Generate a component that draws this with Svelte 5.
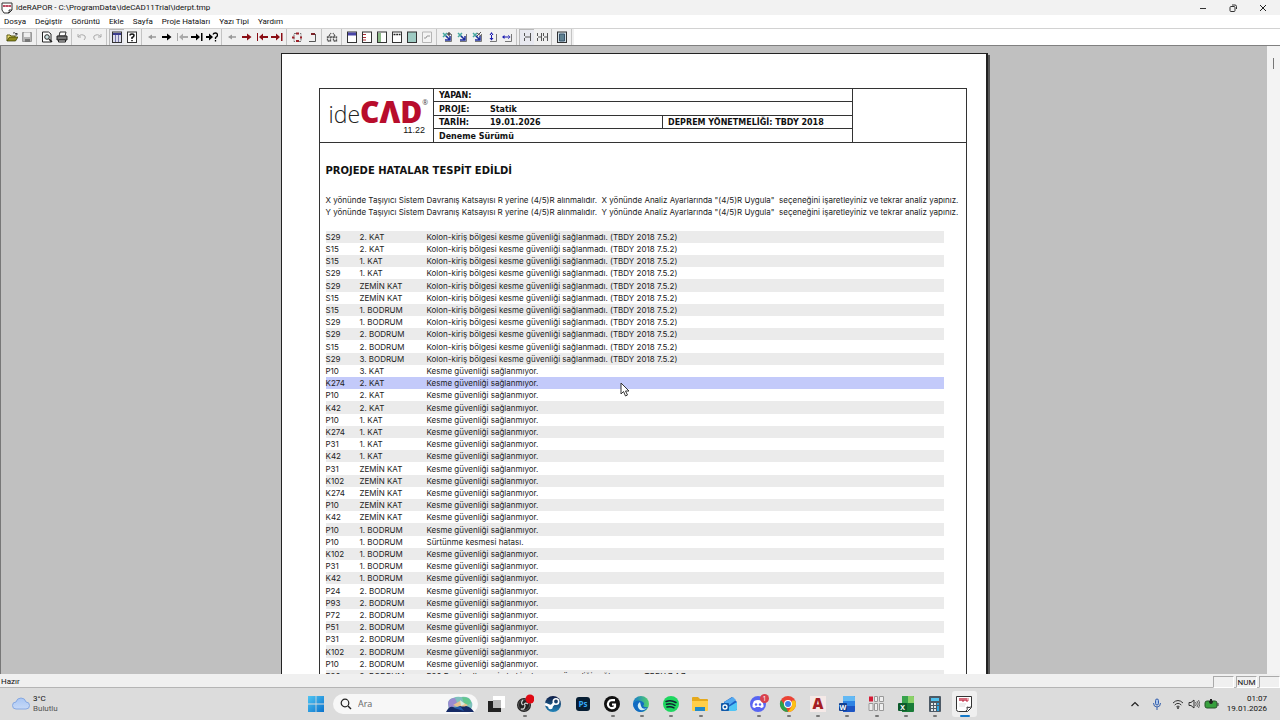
<script>
  const menus = ['Dosya', 'Değiştir', 'Görüntü', 'Ekle', 'Sayfa', 'Proje Hataları', 'Yazı Tipi', 'Yardım'];

  const right = (c) => `<path d="M1 5h5V2.500L10.500 6 6 9.500V7H1z" fill="${c}"/>`;
  const left = (c) => `<path d="M10 5.300H6V3.500L2 6l4 2.500V6.700h4z" fill="${c}"/>`;
  const toStart = (c) => `<path d="M1 2h1v8H1zM12 5H7V2.500L3 6l4 3.500V7h5z" fill="${c}"/>`;
  const toEnd = (c) => `<path d="M10 2h1.500v8H10zM0 5h5V2.500L9 6 5 9.500V7H0z" fill="${c}"/>`;
  const sheet = (inner, bg = '#fff') =>
    `<rect x="1.500" y="1" width="9" height="10.500" fill="${bg}" stroke="#333"/>${inner}`;
  const corner = '<path d="M10.500 3v7.500H4" fill="none" stroke="#777"/>';
  const magnify = '<path d="M2 2l4 4M6 2L2 6" stroke="#48a8a0" stroke-width="1.500"/><path d="M5 5l4 4M9 5v4H4" stroke="#1c2c9c" stroke-width="1.500" fill="none"/>';

  const groups = [
    [
      ['Aç', '<path d="M1 10V4h3l1 1h4v2" fill="#f3e37a" stroke="#5c5a10"/><path d="M1 10l2.500-4H12L9.500 10z" fill="#8f8a1c" stroke="#333a00" stroke-width=".7"/><path d="M7 2q2-1 3 1l1-1v2H9" fill="none" stroke="#222" stroke-width=".8"/>'],
      ['Kaydet', '<path d="M1.500 1.500h9v9h-9z" fill="#b5b5b5" stroke="#999"/><path d="M3 1.500h6V6H3z" fill="#eee"/><path d="M4 8h5v3H4z" fill="#777"/>']
    ],
    [
      ['Baskı önizleme', '<path d="M1.500 1h6L10 3v8H1.500z" fill="#fff" stroke="#222"/><circle cx="6" cy="6" r="2.300" fill="#cfe3e3" stroke="#222"/><path d="M8 8l3 3" stroke="#222" stroke-width="1.500"/>'],
      ['Yazdır', '<path d="M4 1h6L9 5H3z" fill="#fff" stroke="#333"/><path d="M1 5h10v4H1z" fill="#777" stroke="#222"/><path d="M2.500 9h7v2h-7z" fill="#ddd" stroke="#222"/>']
    ],
    [
      ['Geri al', '<path d="M2 3v3h3M2 6q3-4 7-1 1 2-1 4" fill="none" stroke="#aaa"/>'],
      ['Yinele', '<path d="M10 3v3H7M10 6Q7 2 3 5 2 7 4 9" fill="none" stroke="#aaa"/>']
    ],
    [
      ['Sayfa yapısı', sheet('<path d="M2 3h8" stroke="#3c3c90" stroke-width="2"/><path d="M4.500 4v7M7.500 4v7" stroke="#77a"/>', '#dcdcec'), true],
      ['Yardım', sheet('<path d="M4 4.500Q4 3 6 3t2 1.500Q8 6 6 6.500V8M6 9v1.300" fill="none" stroke="#111" stroke-width="1.500"/>')]
    ],
    [
      ['Önceki', left('#999')],
      ['Sonraki', right('#000')],
      ['İlk', toStart('#aaa')],
      ['Son', toEnd('#000')],
      ['Git', '<path d="M0 5h3V2.500L7 6 3 9.500V7H0z"/><path d="M7 3.500Q7.500 2 9.500 2t2 2q0 1.500-2 2.500V8M9.500 9v1.500" fill="none" stroke="#000" stroke-width="1.300"/>']
    ],
    [
      ['Önceki hata', left('#999')],
      ['Sonraki hata', right('#8a0d14')],
      ['İlk hata', toStart('#8a0d14')],
      ['Son hata', toEnd('#8a0d14')]
    ],
    [
      ['Kenarlar', '<path d="M3 2.500h7v8H3z" fill="none" stroke="#777" stroke-dasharray="2 1"/><path d="M5 1.500h3v2H5zM1 5.500h2.500v2H1zM5 9h3v2H5zM9 5.500h2v2H9z" fill="#9c2028"/>'],
      ['Köşe', '<path d="M9.500 3v7.500H3" fill="none" stroke="#555"/><path d="M5 2h4v2H5z" fill="#7b2328"/>']
    ],
    [['Bul', '<path d="M1.500 6h3v4h-3zM7.500 6h3v4h-3zM3 5l2-3M9 5L7 2M4.500 6h3" fill="none" stroke="#555" stroke-width="1.300" stroke-dasharray="2 .6"/>']],
    [
      ['Üst bilgi', sheet('<path d="M2 1.500h8v3H2z" fill="#4a46a8"/>')],
      ['Sol hiza', sheet('<path d="M2 3.500h3M2 6.500h3M2 9h3" stroke="#b03038"/>')],
      ['Sol kenar', sheet('<path d="M2 2h3v9H2z" fill="#8ab886"/>')],
      ['Ölçü', sheet('<path d="M2.500 3.500h7" stroke="#222" stroke-width="1.500" stroke-dasharray="2 .7"/>')],
      ['Zemin', sheet('', '#9fcbc3')],
      ['İmza', '<path d="M1.500 1h9v10.500h-9z" fill="#f3f3f3" stroke="#b5b5b5"/><path d="M3 7h2l1-2h3" fill="none" stroke="#999"/>']
    ],
    [
      ['Büyüt', corner + magnify + '<path d="M8 1v4M6 3h4" stroke="#222"/>'],
      ['Küçült', corner + magnify],
      ['Pencere', corner + magnify + '<path d="M6 2l4 3M10 1L6 5" stroke="#555"/>'],
      ['Yüksekliğe sığdır', corner + '<path d="M5.500 1L3.500 4h4zM5.500 9.500L3.500 7h4zM5 3h1v5H5z" fill="#1a1ab0"/>'],
      ['Genişliğe sığdır', corner + '<path d="M1 6l2.500-2v4zM9.500 6L7 4v4zM2 5.500h6v1H2z" fill="#1a1ab0"/>']
    ],
    [
      ['Tek sayfa', '<path d="M3.500 2v3M3.500 7v3M9.500 2v8M4 6h5" fill="none" stroke="#555"/>', true],
      ['Çift sayfa', '<path d="M1.500 2v3M1.500 7v3M5.500 2v8M7.500 2v3M7.500 7v3M11.500 2v8M2 6h3M8 6h3" fill="none" stroke="#555"/>']
    ],
    [['Tam sayfa', sheet('<path d="M3.500 3h5v7h-5z" fill="#5f8190" stroke="#39536b"/>', '#cfdfe6')]]
  ];

  const K = 'Kolon-kiriş bölgesi kesme güvenliği sağlanmadı. (TBDY 2018 7.5.2)';
  const G = 'Kesme güvenliği sağlanmıyor.';
  const errors = [
    ['S29', '2. KAT', K], ['S15', '2. KAT', K], ['S15', '1. KAT', K], ['S29', '1. KAT', K],
    ['S29', 'ZEMİN KAT', K], ['S15', 'ZEMİN KAT', K], ['S15', '1. BODRUM', K], ['S29', '1. BODRUM', K],
    ['S29', '2. BODRUM', K], ['S15', '2. BODRUM', K], ['S29', '3. BODRUM', K],
    ['P10', '3. KAT', G], ['K274', '2. KAT', G], ['P10', '2. KAT', G], ['K42', '2. KAT', G],
    ['P10', '1. KAT', G], ['K274', '1. KAT', G], ['P31', '1. KAT', G], ['K42', '1. KAT', G],
    ['P31', 'ZEMİN KAT', G], ['K102', 'ZEMİN KAT', G], ['K274', 'ZEMİN KAT', G], ['P10', 'ZEMİN KAT', G],
    ['K42', 'ZEMİN KAT', G], ['P10', '1. BODRUM', G], ['P10', '1. BODRUM', 'Sürtünme kesmesi hatası.'],
    ['K102', '1. BODRUM', G], ['P31', '1. BODRUM', G], ['K42', '1. BODRUM', G], ['P24', '2. BODRUM', G],
    ['P93', '2. BODRUM', G], ['P72', '2. BODRUM', G], ['P51', '2. BODRUM', G], ['P31', '2. BODRUM', G],
    ['K102', '2. BODRUM', G], ['P10', '2. BODRUM', G],
    ['P20', '2. BODRUM', 'P20 Perde altı zemin hakim kesme güvenliği sağlanmıyor. TBDY 7.4.7']
  ];
  let selected = $state(12);

  const apps = [
    { name: 'Görev görünümü', art: '<path d="M8 2h12v12H8z" fill="#fff"/><path d="M8 6h8v8H8z" fill="#bbb"/><path d="M3 7h5v7h8v4H3z" fill="#222"/>' },
    { name: 'OBS Studio', run: true, art: '<circle cx="10" cy="11" r="7" fill="#222"/><circle cx="10" cy="11" r="5.500" fill="none" stroke="#555"/><path d="M9 6q-3 3 0 5M14 10q-3-2-4 1M7 15q4 1 4-4" fill="none" stroke="#ccc" stroke-width="1.300"/><circle cx="16" cy="5" r="4.500" fill="#e00914"/>' },
    { name: 'Steam', art: '<defs><linearGradient id="st" x2="0" y2="1"><stop stop-color="#101c45"/><stop offset="1" stop-color="#2184b9"/></linearGradient></defs><circle cx="10" cy="10" r="8" fill="url(#st)"/><circle cx="13" cy="7.500" r="2.700" fill="none" stroke="#fff" stroke-width="1.600"/><path d="M2 10l6 2.500 3-3" stroke="#fff" stroke-width="2.500" fill="none"/><circle cx="7.500" cy="13" r="2.300" fill="#fff"/>' },
    { name: 'Photoshop', art: '<rect x="3" y="3" width="14" height="14" rx="3" fill="#071e33"/><text x="10" y="13" text-anchor="middle" font-family="Open Sans, sans-serif" font-weight="700" font-size="8" fill="#35a8f4">Ps</text>' },
    { name: 'Logitech G HUB', run: true, art: '<circle cx="10" cy="10" r="8" fill="#111"/><path d="M13 6.200H10a4 4 0 1 0 3 6.500V10.500H10" fill="none" stroke="#fff" stroke-width="2.200"/>' },
    { name: 'Edge', run: true, art: '<defs><linearGradient id="ed"><stop stop-color="#1679ce"/><stop offset="1" stop-color="#54d36b"/></linearGradient></defs><circle cx="10" cy="10" r="8" fill="url(#ed)"/><path d="M2 10Q5 5 10 7t2 5q2 2 5 1-3 5-8 5-6-1-7-8z" fill="#126bc2"/><path d="M9 8q-4 3-1 7 3 3 8-1-5 2-6-2z" fill="#d4f1f7"/>' },
    { name: 'Spotify', run: true, art: '<circle cx="10" cy="10" r="8" fill="#1ed760"/><path d="M5 7.500q5-2 10 1M5.500 10.300q4.500-1.500 8.500 1M6 13q3.500-1 7 .8" fill="none" stroke="#123" stroke-width="1.500" stroke-linecap="round"/>' },
    { name: 'Dosya Gezgini', run: true, art: '<path d="M2 4q0-1 1-1h5l2 2h7q1 0 1 1v10H2z" fill="#e5a91c"/><path d="M2 7h16v9q0 1-1 1H3q-1 0-1-1z" fill="#ffcf4a"/><path d="M5 13h10v4H5z" fill="#218ac9"/>' },
    { name: 'Outlook', art: '<path d="M5 8l8-5 5 5v8H5z" fill="#1b61c7"/><path d="M5 8l9-5 3 3-8 6z" fill="#54a9f0"/><path d="M8 14l10-6v7q0 2-2 2H8z" fill="#50c5f5"/><rect x="2" y="9" width="8" height="8" rx="1" fill="#1159a8"/><circle cx="6" cy="13" r="2" fill="none" stroke="#fff" stroke-width="1.300"/>' },
    { name: 'Discord', run: true, art: '<circle cx="9" cy="10" r="8" fill="#5865f2"/><path d="M5 7q4-2 8 0 2 3 1.500 6-1.500 1-2.500 1l-1-1H7l-1 1q-1 0-2.500-1Q3 10 5 7z" fill="#fff"/><circle cx="7" cy="10.500" r="1.200" fill="#5865f2"/><circle cx="11" cy="10.500" r="1.200" fill="#5865f2"/><circle cx="15.500" cy="4.500" r="4.500" fill="#d9414c"/><text x="15.500" y="7" text-anchor="middle" font-family="Open Sans, sans-serif" font-size="7" fill="#fff">1</text>' },
    { name: 'Chrome', run: true, art: '<circle cx="10" cy="10" r="8" fill="#ea4335"/><path d="M3 6l5 7 2 5a8 8 0 0 1-7-12z" fill="#2ba24c"/><path d="M10 18l4-6V6.500h3.200A8 8 0 0 1 10 18z" fill="#fbc116"/><circle cx="10" cy="10" r="4" fill="#fff"/><circle cx="10" cy="10" r="3" fill="#3b7de9"/>' },
    { name: 'AutoCAD', run: true, art: '<path d="M2 2h16v16H2z" fill="#f5e9e7"/><text x="10" y="15" text-anchor="middle" font-family="Open Sans, sans-serif" font-weight="800" font-size="15" fill="#a51d23">A</text>' },
    { name: 'Word', run: true, art: '<path d="M6 2h11q1 0 1 1v14q0 1-1 1H6z" fill="#1d55c4"/><path d="M6 2h11q1 0 1 1v4H6z" fill="#63b9f4"/><path d="M6 7h12v5H6z" fill="#2e83e4"/><rect x="2" y="9" width="8" height="8" rx="1" fill="#123f91"/><text x="6" y="15.500" text-anchor="middle" font-family="Open Sans, sans-serif" font-weight="700" font-size="7" fill="#fff">W</text>' },
    { name: 'ideCAD', run: true, art: '<path d="M3 2.500h4v5H3z" fill="#d51b36"/><path d="M8.500 2.500h3v5h-3zM13.500 2.500h4v5h-4zM3 9.500h4v7H3zM8.500 9.500h3v7h-3zM13.500 9.500h4v7h-4z" fill="#eee" stroke="#999"/>' },
    { name: 'Excel', run: true, art: '<path d="M6 2h11q1 0 1 1v14q0 1-1 1H6z" fill="#187b37"/><path d="M6 2h6v7H6z" fill="#38a34d"/><path d="M12 2h5q1 0 1 1v6h-6z" fill="#8bd168"/><rect x="2" y="9" width="9" height="8" rx="1" fill="#0d5a2b"/><text x="6.500" y="15.500" text-anchor="middle" font-family="Open Sans, sans-serif" font-weight="700" font-size="7" fill="#fff">X</text>' },
    { name: 'Hesap Makinesi', run: true, art: '<rect x="4" y="2" width="12" height="16" rx="1" fill="#4d5a66"/><path d="M6 4h8v3H6z" fill="#52c2ef"/><path d="M6 9h2v2H6zM9 9h2v2H9zM6 12h2v2H6zM9 12h2v2H9zM6 15h2v2H6zM9 15h2v2H9z" fill="#e3e8eb"/><path d="M12 9h2v2h-2zM12 12h2v5h-2z" fill="#2fa4df"/>' },
    { name: 'ideRAPOR', active: true, art: '<path d="M2.500 2.500h15v11l-4 4h-9q-2 0-2-2z" fill="#fff" stroke="#333"/><path d="M12 17q2-1 1-4 2 1 4 0" fill="#fff" stroke="#333"/><path d="M5 4h10v3H5z" fill="#e8a9b1"/><path d="M6 4v3M8 4v3h2V4M12 4v3h2" stroke="#bd2741" fill="none"/><path d="M5 10h7M5 12h6" stroke="#ddd"/>' }
  ];
</script>

<div class="window">
  <header class="titlebar">
    <svg width="12" height="12" viewBox="0 0 12 12"><path d="M1 1h10v7l-3 3H3L1 8z" fill="#fff" stroke="#333" /><path d="M2 3h8v2H2z" fill="#d5798a" /><path d="M3 3v2M6 3v2M9 3v2" stroke="#a21f3a" /><path d="M7 11q2-1 1-3h3" fill="none" stroke="#333" /></svg>
    <span class="name">ideRAPOR - C:\ProgramData\ideCAD11Trial\iderpt.tmp</span>
    <div class="controls">
      <button aria-label="Simge durumuna küçült"><svg width="10" height="10" viewBox="0 0 10 10"><path d="M2 5.500h6" stroke="#333" /></svg></button>
      <button aria-label="Geri yükle"><svg width="10" height="10" viewBox="0 0 10 10"><rect x="2" y="3.500" width="5" height="5" rx="1" fill="none" stroke="#333" /><path d="M4 2h3q1.500 0 1.500 1.500V6" fill="none" stroke="#333" /></svg></button>
      <button aria-label="Kapat"><svg width="10" height="10" viewBox="0 0 10 10"><path d="M2 2l6 6M8 2L2 8" stroke="#222" /></svg></button>
    </div>
  </header>

  <nav class="menubar">
    {#each menus as m}<button>{m}</button>{/each}
  </nav>

  <div class="toolbar">
    <div class="tools">
      {#each groups as group}
        <div class="group">
          {#each group as [label, art, on]}
            <button class:on aria-label={label}>{@html `<svg width="12" height="12" viewBox="0 0 12 12">${art}</svg>`}</button>
          {/each}
        </div>
      {/each}
    </div>
  </div>

  <main class="view">
    <div class="canvas">
      <article class="paper">
        <div class="frame">
          <table class="head">
            <colgroup><col class="c-logo" /><col class="c-left" /><col class="c-mid" /><col class="c-end" /></colgroup>
            <tbody>
              <tr>
                <td rowspan="4" class="logo-cell">
                  <div class="logo"><span class="ide">ide</span><span class="cad">CΛD</span><span class="reg">®</span></div>
                  <div class="version">11.22</div>
                </td>
                <td colspan="2"><b>YAPAN:</b></td>
                <td rowspan="4"></td>
              </tr>
              <tr><td colspan="2"><b>PROJE:</b><span>Statik</span></td></tr>
              <tr><td><b>TARİH:</b><span>19.01.2026</span></td><td>DEPREM YÖNETMELİĞİ: TBDY 2018</td></tr>
              <tr><td colspan="2">Deneme Sürümü</td></tr>
            </tbody>
          </table>

          <div class="content">
            <h1>PROJEDE HATALAR TESPİT EDİLDİ</h1>
            <p>X yönünde Taşıyıcı Sistem Davranış Katsayısı R yerine (4/5)R alınmalıdır.  X yönünde Analiz Ayarlarında "(4/5)R Uygula"  seçeneğini işaretleyiniz ve tekrar analiz yapınız.</p>
            <p>Y yönünde Taşıyıcı Sistem Davranış Katsayısı R yerine (4/5)R alınmalıdır.  Y yönünde Analiz Ayarlarında "(4/5)R Uygula"  seçeneğini işaretleyiniz ve tekrar analiz yapınız.</p>
            <table class="errors">
              <colgroup><col class="c-id" /><col class="c-floor" /><col /></colgroup>
              <tbody>
                {#each errors as [id, floor, text], i}
                  <tr class:selected={i === selected} onclick={() => (selected = i)}>
                    <td>{id}</td><td>{floor}</td><td>{text}</td>
                  </tr>
                {/each}
              </tbody>
            </table>
          </div>
        </div>
      </article>
    </div>
    <div class="scroll"><div class="thumb"></div></div>
    <svg class="pointer" width="10" height="15" viewBox="0 0 10 15"><path d="M1 1v11l2.500-2.500L5.500 14l2-1-2-4H9z" fill="#fff" stroke="#333" /></svg>
  </main>

  <footer class="status">
    <span class="ready">Hazır</span>
    <span class="pane"></span><span class="pane">NUM</span><span class="pane"></span>
  </footer>

  <div class="taskbar">
    <div class="weather">
      <svg width="18" height="14" viewBox="0 0 18 14"><defs><linearGradient id="cl" x2="0" y2="1"><stop stop-color="#a9c6f4" /><stop offset="1" stop-color="#c6d9f7" /></linearGradient></defs><path d="M4 12a3.500 3.500 0 0 1 0-7q1-4 5-4t5 4a3.500 3.500 0 0 1 0 7z" fill="url(#cl)" stroke="#86a8e2" /></svg>
      <div><div>3°C</div><div class="dim">Bulutlu</div></div>
    </div>

    <div class="dock">
      <button class="start" aria-label="Başlat"><svg width="16" height="16" viewBox="0 0 16 16"><defs><linearGradient id="wn" x2="1" y2="1"><stop stop-color="#4fc5f3" /><stop offset="1" stop-color="#0a72cc" /></linearGradient></defs><path d="M0 0h7.600v7.600H0zM8.400 0H16v7.600H8.400zM0 8.400h7.600V16H0zM8.400 8.400H16V16H8.400z" fill="url(#wn)" /></svg></button>
      <label class="search">
        <svg width="12" height="12" viewBox="0 0 12 12"><circle cx="5" cy="5" r="3.800" fill="none" stroke="#222" stroke-width="1.200" /><path d="M8 8l3 3" stroke="#222" stroke-width="1.400" /></svg>
        <input type="text" placeholder="Ara" aria-label="Ara" />
        <svg width="28" height="16" viewBox="0 0 28 16"><path d="M2 8q0-5 5-6 4-2 8-1 8-1 10 4 2 2 1 6l-2 4H3z" fill="#7fc0bd" /><path d="M2 7q1-5 7-5l3 7-9 4z" fill="#9a8bd0" /><path d="M16 1q9 0 9 6l-6 4z" fill="#63c78f" /><path d="M7 9l7-4 8 4-5 4z" fill="#e8c18e" /><path d="M14 4l5 4-4 2z" fill="#d8e9df" /><path d="M0 16q3-6 7-5 4 2 7-1 4 1 6 0 5 1 8 6z" fill="#152a66" /><path d="M8 12l6-2 4 5z" fill="#245aab" /></svg>
      </label>
      <div class="apps">
        {#each apps as app}
          <button class:active={app.active} class:run={app.run} aria-label={app.name}>{@html `<svg width="20" height="20" viewBox="0 0 20 20">${app.art}</svg>`}</button>
        {/each}
      </div>
    </div>

    <div class="tray">
      <svg class="chev" width="10" height="10" viewBox="0 0 10 10"><path d="M1.500 7L5 3.500 8.500 7" fill="none" stroke="#222" stroke-width="1.200" /></svg>
      <svg class="mic" width="10" height="12" viewBox="0 0 10 12"><rect x="3.500" y="1" width="3" height="6" rx="1.500" fill="#a8c4ee" stroke="#345fac" /><path d="M1.500 5q0 4 3.500 4t3.500-4M5 9v3" fill="none" stroke="#345fac" /></svg>
      <svg width="12" height="12" viewBox="0 0 12 12"><path d="M1 5q5-5 10 0M2.700 7q3.300-3.300 6.600 0M4.400 8.800q1.600-1.600 3.200 0" fill="none" stroke="#333" /><circle cx="6" cy="10" r="1" fill="#333" /></svg>
      <svg width="12" height="12" viewBox="0 0 12 12"><path d="M1 4.500h2L6 2v8L3 7.500H1z" fill="none" stroke="#333" /><path d="M7.500 4q1.500 2 0 4M9 3q2.500 3 0 6M10.500 2q3 4 0 8" fill="none" stroke="#444" stroke-width=".8" /></svg>
      <svg width="15" height="12" viewBox="0 0 15 12"><rect x="1" y="3" width="12" height="7" rx="2" fill="#37a03d" stroke="#27552a" /><path d="M14 5v3" stroke="#333" /><path d="M6 1v2H5q0 3 2 3t2-3H8V1" fill="#222" /></svg>
      <div class="clock"><div>01:07</div><div>19.01.2026</div></div>
    </div>
  </div>
</div>

<style>
  :global(body) { margin: 0; }
  .window {
    height: 100vh;
    display: flex;
    flex-direction: column;
    overflow: hidden;
    background: #fff;
    color: #111;
    font: 8px/12px Roboto, "Open Sans", sans-serif;
  }
  button { margin: 0; padding: 0; border: 0; background: none; font: inherit; color: inherit; display: grid; place-items: center; }

  .titlebar { flex: none; height: 15px; display: flex; align-items: center; gap: 3px; padding: 0 2px 0 1px; background: #f2f2f2; }
  .name { flex: 1; }
  .controls { display: flex; }
  .controls button { width: 30px; height: 15px; }
  .menubar { flex: none; height: 13px; display: flex; align-items: center; gap: 9px; padding-left: 4px; }

  .toolbar { flex: none; height: 18px; box-sizing: border-box; border-top: 1px solid #d2d2d2; border-bottom: 1px solid #808080; background: #fff; }
  .tools { width: max-content; height: 100%; display: flex; align-items: center; padding-left: 4px; background: #f0f0f0; }
  .group { display: flex; padding-right: 2px; margin-right: 2px; border-right: 1px solid #c4c4c4; }
  .group button { width: 15px; height: 16px; }
  .group button.on { background: #e8e9f0; box-shadow: inset 1px 1px #bbb; }

  .view { flex: 1; min-height: 0; display: flex; position: relative; border-left: 1px solid #777; }
  .canvas { flex: 1; overflow: hidden; background: #c0c0c0; padding-top: 7px; }
  .paper {
    width: 707px;
    max-width: 100%;
    box-sizing: border-box;
    margin: 0 auto;
    padding: 34px 19px 40px 37px;
    background: #fff;
    border: 1px solid #222;
    border-right-width: 2px;
    box-shadow: 2px 2px #555;
    color: #222;
    font: 8px/12px Inter, Verdana, sans-serif;
  }
  .frame { border: 1px solid #333; border-top: 0; }
  table { border-collapse: collapse; table-layout: fixed; width: 100%; }
  td { padding: 0; }
  .head { color: #111; font: 700 8px/10px "DejaVu Sans", Verdana, sans-serif; }
  .head td { height: 10px; padding: 2px 0 0 5px; border: 1px solid #333; white-space: nowrap; }
  .head tr:nth-child(even) td { height: 11px; }
  .head tr > td:first-child[rowspan] { border-left: 0; }
  .head tr > td:last-child[rowspan] { border-right: 0; }
  .head b { display: inline-block; width: 51px; }
  .c-logo { width: 114px; }
  .c-left { width: 229px; }
  .c-mid { width: 190px; }
  .head .logo-cell { padding: 0 4px 0 9px; font-weight: 400; }
  .logo { display: flex; align-items: baseline; height: 28px; line-height: 32px; font-family: "Open Sans", sans-serif; }
  .ide { font-size: 23px; font-weight: 300; color: #222; }
  .cad { font-size: 30px; font-weight: 800; color: #b80d2c; }
  .reg { font-size: 7px; align-self: flex-start; line-height: 14px; color: #444; }
  .version { padding-right: 4px; text-align: right; font: 9px/12px "Liberation Sans", Arial, sans-serif; }

  .content { padding: 21px 22px 0 6px; }
  h1 { margin: 0 0 16px; color: #111; font: 700 10px/14px "DejaVu Sans", Verdana, sans-serif; }
  p { margin: 0; white-space: pre; }
  .errors { margin-top: 13px; }
  .errors td { height: 12px; line-height: 12px; white-space: nowrap; }
  .errors tr:nth-child(5n) td { height: 13px; }
  .errors tr:nth-child(odd) { background: #ebebeb; }
  .errors tr.selected { background: #c3cafa; }
  .c-id { width: 34px; }
  .c-floor { width: 67px; }

  .scroll { flex: none; width: 13px; background: #f3f3f3; }
  .thumb { width: 1px; height: 11px; margin: 12px auto 0; background: #777; }
  .pointer { position: absolute; left: 619px; top: 336px; }

  .status { flex: none; height: 14px; box-sizing: border-box; display: flex; align-items: center; gap: 2px; padding: 2px 0 0 1px; background: #f0f0f0; border-bottom: 1px solid #b5b5b5; }
  .ready { flex: 1; }
  .pane { width: 19px; height: 10px; line-height: 11px; border: 1px solid #aaa; border-right-color: #fff; border-bottom-color: #fff; text-align: center; }

  .taskbar { flex: none; height: 32px; display: grid; grid-template-columns: 1fr auto 1fr; align-items: center; background: #dcdcdc; line-height: 10px; }
  .weather { display: flex; align-items: center; gap: 3px; padding-left: 12px; }
  .dim { color: #555; }
  .dock { display: flex; align-items: center; }
  .start { width: 29px; height: 32px; margin-right: 3px; }
  .search { width: 145px; height: 20px; box-sizing: border-box; display: flex; align-items: center; gap: 6px; padding: 0 4px 0 7px; margin-right: 2px; border-radius: 10px; background: #f7f7f7; }
  .search input { flex: 1; min-width: 0; padding: 0; border: 0; outline: 0; background: none; font: 9px/12px "Open Sans", sans-serif; }
  .search input::placeholder { color: #666; opacity: 1; }
  .apps { width: 499px; display: grid; grid-template-columns: repeat(17, 1fr); justify-items: center; }
  .apps button { width: 25px; height: 26px; position: relative; border-radius: 3px; }
  .apps button.active { background: #efefef; }
  .apps button.run::after, .apps button.active::after { content: ""; position: absolute; bottom: 0; left: 11px; width: 4px; height: 2px; border-radius: 1px; background: #777; }
  .apps button.active::after { left: 8px; width: 10px; background: #1478c8; }
  .tray { display: flex; align-items: center; justify-content: flex-end; gap: 4px; padding-right: 13px; }
  .chev { margin-right: 8px; }
  .mic { margin-right: 6px; }
  .clock { width: 44px; text-align: right; }
</style>
